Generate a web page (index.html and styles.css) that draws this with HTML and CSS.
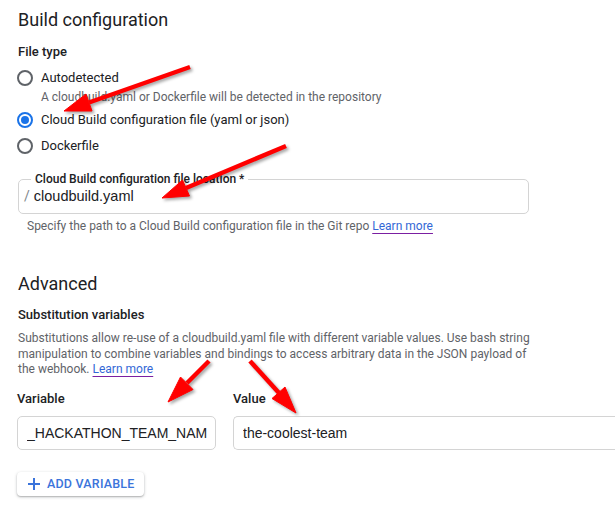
FILE: index.html
```html
<!DOCTYPE html>
<html lang="en">
<head>
<meta charset="utf-8">
<title>Build configuration</title>
<link rel="stylesheet" href="styles.css">
</head>
<body>
<main class="page">
  <h2 class="title">Build configuration</h2>
  <div class="label file-type">File type</div>
  <div class="radio-row r1"><span class="radio"></span><span class="rtext">Autodetected</span></div>
  <div class="hint radio-hint">A cloudbuild.yaml or Dockerfile will be detected in the repository</div>
  <div class="radio-row r2"><span class="radio checked"></span><span class="rtext">Cloud Build configuration file (yaml or json)</span></div>
  <div class="radio-row r3"><span class="radio"></span><span class="rtext">Dockerfile</span></div>

  <fieldset class="outlined">
    <legend>Cloud Build configuration file location *</legend>
    <span class="prefix">/</span><span class="fval">cloudbuild.yaml</span>
  </fieldset>
  <div class="hint helper">Specify the path to a Cloud Build configuration file in the Git repo <a href="#">Learn more</a></div>

  <h2 class="title adv">Advanced</h2>
  <div class="label sub">Substitution variables</div>
  <p class="hint desc">Substitutions allow re-use of a cloudbuild.yaml file with different variable values. Use bash string manipulation to combine variables and bindings to access arbitrary data in the JSON payload of the webhook. <a href="#">Learn more</a></p>

  <div class="vars">
    <div class="col var">
      <div class="label">Variable</div>
      <div class="box"><span class="btext">_HACKATHON_TEAM_NAME</span></div>
    </div>
    <div class="col val">
      <div class="label">Value</div>
      <div class="box open"><span class="btext">the-coolest-team</span></div>
    </div>
  </div>

  <button class="add"><svg class="plus" width="12" height="12" viewBox="0 0 12 12"><path d="M5 0h2v5h5v2H7v5H5V7H0V5h5z" fill="currentColor"/></svg>ADD VARIABLE</button>
</main>

<svg class="arrows" width="615" height="530" viewBox="0 0 615 530">
  <g fill="#ff0000" stroke="#ff0000">
    <line x1="190" y1="67" x2="89" y2="102.5" stroke-width="4.5"/>
    <polygon points="64,111 92,111 86,94" stroke-width="1"/>
    <line x1="286" y1="146" x2="186" y2="188" stroke-width="4.5"/>
    <polygon points="162,198 189.5,196 182.5,180" stroke-width="1"/>
    <line x1="209" y1="361" x2="187" y2="383" stroke-width="4.5"/>
    <polygon points="168,402 193,389.5 180.5,377" stroke-width="1"/>
    <line x1="250" y1="361" x2="279" y2="393" stroke-width="4.5"/>
    <polygon points="296,413 272,398.5 285,387" stroke-width="1"/>
  </g>
</svg>
</body>
</html>
```
FILE: styles.css
```css
html, body {
  margin: 0;
  padding: 0;
  background: #ffffff;
}

body {
  font-family: Roboto, "Liberation Sans", Arial, sans-serif;
  color: #202124;
  width: 615px;
  height: 530px;
  overflow: hidden;
  position: relative;
}

.page {
  padding-left: 18px;
  display: flex;
  flex-direction: column;
  align-items: flex-start;
}

.title {
  margin: 8px 0 0;
  font-size: 18px;
  line-height: 24px;
  font-weight: 400;
  color: #202124;
}

.title.adv {
  margin-top: 38px;
}

.label {
  font-size: 13px;
  line-height: 16px;
  font-weight: 500;
  color: #202124;
}

.file-type {
  margin-top: 12px;
}

.radio-row {
  display: flex;
  align-items: center;
  height: 20px;
  font-size: 13px;
  line-height: 20px;
  color: #202124;
}

.radio-row.r1 { margin-top: 8px; }
.radio-row.r2 { margin-top: 5px; }
.radio-row.r3 { margin-top: 6px; }

.radio {
  box-sizing: border-box;
  width: 16px;
  height: 16px;
  border: 2px solid #5f6368;
  border-radius: 50%;
  margin-left: -1px;
  margin-right: 8px;
  display: flex;
  align-items: center;
  justify-content: center;
}

.radio.checked {
  border-color: #1a73e8;
}

.radio.checked::after {
  content: "";
  width: 8px;
  height: 8px;
  border-radius: 50%;
  background: #1a73e8;
}

.hint {
  font-size: 12px;
  line-height: 16px;
  color: #5f6368;
}

.radio-hint {
  margin-top: 1px;
  margin-left: 23px;
}

.hint a {
  color: #3367d6;
  text-decoration: underline;
  text-decoration-color: #7b1fa2;
  text-underline-offset: 3px;
}

.outlined {
  box-sizing: border-box;
  width: 511px;
  margin: 16px 0 0 0;
  padding: 0 8px 7px 5px;
  border: 1px solid #d4d4d4;
  border-radius: 5px;
  display: flex;
  align-items: baseline;
  min-inline-size: 0;
}

.outlined legend {
  font-size: 12px;
  line-height: 14px;
  font-weight: 500;
  color: #202124;
  padding: 0 4px;
  margin-left: 7px;
}

.prefix {
  font-size: 14px;
  line-height: 20px;
  color: #80868b;
  margin-right: 4px;
}

.fval {
  font-family: "Liberation Sans", Arial, sans-serif;
  font-size: 14.5px;
  line-height: 20px;
  color: #202124;
}

.helper {
  margin-top: 4px;
  margin-left: 9px;
}

.sub {
  margin-top: 11px;
}

.desc {
  margin: 8px 0 0;
  width: 516px;
  line-height: 15.5px;
}

.vars {
  display: flex;
  gap: 17px;
  margin-top: 13px;
  align-self: stretch;
}

.col {
  display: flex;
  flex-direction: column;
  gap: 9px;
}

.col.var {
  width: 199px;
  margin-left: -1px;
}

.col.val {
  flex: 1;
}

.box {
  box-sizing: border-box;
  height: 34px;
  border: 1px solid #d4d4d4;
  border-radius: 5px;
  padding: 0 8px 0 9px;
  display: flex;
  align-items: center;
  font-family: "Liberation Sans", Arial, sans-serif;
  font-size: 14px;
  color: #202124;
  white-space: nowrap;
}

.btext {
  display: block;
  overflow: hidden;
  min-width: 0;
  flex: 1;
  line-height: 20px;
}

.box.open {
  border-right: none;
  border-radius: 5px 0 0 5px;
}

.add {
  margin: 22px 0 0 -1px;
  height: 24px;
  padding: 0 9px 0 11px;
  border: none;
  border-radius: 4px;
  background: #ffffff;
  box-shadow: 0 1px 3px rgba(60, 64, 67, 0.35), 0 1px 1px rgba(60, 64, 67, 0.15);
  color: #3b74db;
  font-family: Roboto, "Liberation Sans", Arial, sans-serif;
  font-size: 12.5px;
  font-weight: 500;
  letter-spacing: 0.2px;
  display: flex;
  align-items: center;
  gap: 7px;
}

.plus {
  display: block;
}

.arrows {
  position: absolute;
  left: 0;
  top: 0;
  pointer-events: none;
  filter: drop-shadow(2px 2px 1.5px rgba(0, 0, 0, 0.35));
}
```
